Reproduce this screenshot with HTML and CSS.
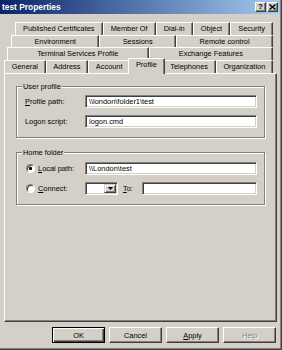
FILE: index.html
```html
<!DOCTYPE html>
<html lang="en">
<head>
    <meta charset="UTF-8">
    <title>test Properties</title>
    <link rel="stylesheet" href="styles.css">
</head>
<body>
    <div class="window">
        <div class="titlebar">
            <span class="title">test Properties</span>
            <div class="caption-buttons">
                <span class="cap-btn help-btn">?</span>
                <span class="cap-btn close-btn">
                    <svg width="7" height="6" viewBox="0 0 7 6"><path d="M0.5 0.5 L6.5 5.5 M6.5 0.5 L0.5 5.5" stroke="#000" stroke-width="1.4"/></svg>
                </span>
            </div>
        </div>

        <div class="tabs">
            <div class="tab-row row1">
                <div class="tab">Published Certificates</div>
                <div class="tab">Member Of</div>
                <div class="tab">Dial-in</div>
                <div class="tab">Object</div>
                <div class="tab">Security</div>
            </div>
            <div class="tab-row row2">
                <div class="tab">Environment</div>
                <div class="tab">Sessions</div>
                <div class="tab">Remote control</div>
            </div>
            <div class="tab-row row3">
                <div class="tab">Terminal Services Profile</div>
                <div class="tab">Exchange Features</div>
            </div>
            <div class="tab-row row4">
                <div class="tab">General</div>
                <div class="tab">Address</div>
                <div class="tab">Account</div>
                <div class="tab active">Profile</div>
                <div class="tab">Telephones</div>
                <div class="tab">Organization</div>
            </div>
        </div>

        <div class="panel">
            <div class="group user-group">
                <div class="group-title">User profile</div>
                <div class="field-row first">
                    <label class="field-label"><u>P</u>rofile path:</label>
                    <div class="textbox">\\london\folder1\test</div>
                </div>
                <div class="field-row">
                    <label class="field-label">Logon script:</label>
                    <div class="textbox">logon.cmd</div>
                </div>
            </div>

            <div class="group home-group">
                <div class="group-title">Home folder</div>
                <div class="field-row first">
                    <span class="radio checked"></span>
                    <label class="radio-label"><u>L</u>ocal path:</label>
                    <div class="textbox">\\London\test</div>
                </div>
                <div class="field-row">
                    <span class="radio"></span>
                    <label class="radio-label"><u>C</u>onnect:</label>
                    <div class="combo">
                        <div class="combo-value"></div>
                        <div class="combo-btn">
                            <svg width="5" height="3" viewBox="0 0 5 3"><path d="M0 0 H5 L2.5 3 Z" fill="#000"/></svg>
                        </div>
                    </div>
                    <label class="to-label"><u>T</u>o:</label>
                    <div class="textbox"></div>
                </div>
            </div>
        </div>

        <div class="button-bar">
            <button class="btn default">OK</button>
            <button class="btn">Cancel</button>
            <button class="btn"><u>A</u>pply</button>
            <button class="btn disabled">Help</button>
        </div>
    </div>
</body>
</html>
```

FILE: styles.css
```css
body {
    margin: 0;
    background-color: #d4d0c8;
    font-family: "Liberation Sans", Arial, sans-serif;
    font-size: 7.4px;
    color: #000;
}
.window {
    width: 282px;
    height: 350px;
    box-sizing: border-box;
    background-color: #d4d0c8;
    border-right: 1px solid #404040;
    border-bottom: 1px solid #404040;
    box-shadow: inset -1px -1px 0 #808080;
    display: flex;
    flex-direction: column;
}

/* title bar */
.titlebar {
    height: 14px;
    margin-right: 1px;
    padding: 0 2px 0 2px;
    background: linear-gradient(to right, #0a246a, #a6caf0);
    display: flex;
    align-items: center;
    justify-content: space-between;
}
.title {
    color: #fff;
    font-weight: bold;
    font-size: 8.4px;
}
.caption-buttons {
    display: flex;
    gap: 1px;
}
.cap-btn {
    width: 11px;
    height: 10px;
    box-sizing: border-box;
    background-color: #d4d0c8;
    border-top: 1px solid #fff;
    border-left: 1px solid #fff;
    border-right: 1px solid #404040;
    border-bottom: 1px solid #404040;
    box-shadow: inset -1px -1px 0 #808080;
    display: flex;
    align-items: center;
    justify-content: center;
    font-weight: bold;
    font-size: 8px;
    line-height: 8px;
}

/* tabs */
.tabs {
    margin-top: 8px;
}
.tab-row {
    display: flex;
    height: 13px;
    margin-right: 8px;
}
.row1 { margin-left: 15px; }
.row2 { margin-left: 11px; height: 12px; }
.row3 { margin-left: 7px; }
.row4 { margin-left: 4px; }
.tab {
    flex: 1 1 auto;
    padding: 0 3px;
    border-top: 1px solid #fff;
    border-left: 1px solid #fff;
    border-right: 1px solid #404040;
    box-shadow: inset -1px 0 0 #808080;
    text-align: center;
    line-height: 11px;
    white-space: nowrap;
    background-color: #d4d0c8;
}
.tab.active {
    margin: -2px -2px -1px -2px;
    padding-bottom: 2px;
    line-height: 11px;
    z-index: 1;
}

/* panel */
.panel {
    height: 249px;
    margin: 0 4px;
    box-sizing: border-box;
    border-top: 1px solid #fff;
    border-left: 1px solid #fff;
    border-right: 1px solid #404040;
    border-bottom: 1px solid #404040;
    box-shadow: inset -1px -1px 0 #808080;
    padding-top: 12px;
}
.group {
    margin: 0 11px;
    box-sizing: border-box;
    border: 1px solid #808080;
    box-shadow: 1px 1px 0 #fff, inset 1px 1px 0 #fff;
    padding: 0 7px 0 8px;
}
.user-group {
    height: 52px;
}
.home-group {
    height: 53px;
    margin-top: 14px;
}
.group-title {
    width: fit-content;
    height: 9px;
    line-height: 9px;
    margin: -5px 0 0 -3px;
    padding: 0 1px;
    background-color: #d4d0c8;
}
.field-row {
    display: flex;
    align-items: center;
    height: 13px;
    margin-top: 7px;
}
.user-group .field-row.first {
    margin-top: 4px;
}
.home-group .field-row.first {
    margin-top: 5px;
}
.field-label {
    width: 60px;
    flex-shrink: 0;
}
.radio {
    width: 9px;
    height: 9px;
    box-sizing: border-box;
    margin-left: 1px;
    border-radius: 50%;
    border: 1px solid;
    border-color: #808080 #fff #fff #808080;
    box-shadow: inset 1px 1px 0 #404040;
    background: #fff;
    flex-shrink: 0;
}
.radio.checked {
    background: radial-gradient(circle, #000 1.3px, #fff 1.8px);
}
.radio-label {
    width: 47px;
    margin-left: 3px;
    flex-shrink: 0;
}
.textbox {
    flex: 1;
    height: 13px;
    box-sizing: border-box;
    background-color: #fff;
    border-top: 1px solid #808080;
    border-left: 1px solid #808080;
    border-right: 1px solid #fff;
    border-bottom: 1px solid #fff;
    box-shadow: inset 1px 1px 0 #404040, inset -1px -1px 0 #d4d0c8;
    padding-left: 3px;
    line-height: 11px;
    white-space: nowrap;
    overflow: hidden;
}
.combo {
    width: 33px;
    height: 13px;
    box-sizing: border-box;
    flex-shrink: 0;
    display: flex;
    background-color: #fff;
    border-top: 1px solid #808080;
    border-left: 1px solid #808080;
    border-right: 1px solid #fff;
    border-bottom: 1px solid #fff;
    box-shadow: inset 1px 1px 0 #404040, inset -1px -1px 0 #d4d0c8;
    padding: 1px;
}
.combo-value {
    flex: 1;
}
.combo-btn {
    width: 12px;
    box-sizing: border-box;
    background-color: #d4d0c8;
    border-top: 1px solid #d4d0c8;
    border-left: 1px solid #d4d0c8;
    border-right: 1px solid #404040;
    border-bottom: 1px solid #404040;
    box-shadow: inset 1px 1px 0 #fff, inset -1px -1px 0 #808080;
    display: flex;
    align-items: center;
    justify-content: center;
}
.to-label {
    width: 19px;
    margin-left: 5px;
    flex-shrink: 0;
}

/* bottom buttons */
.button-bar {
    display: flex;
    justify-content: flex-end;
    gap: 4px;
    margin: 5px 5px 0 0;
}
.btn {
    width: 53px;
    height: 16px;
    box-sizing: border-box;
    padding: 0;
    font-family: inherit;
    font-size: 7.4px;
    color: #000;
    background-color: #d4d0c8;
    border-top: 1px solid #fff;
    border-left: 1px solid #fff;
    border-right: 1px solid #404040;
    border-bottom: 1px solid #404040;
    box-shadow: inset -1px -1px 0 #808080;
    border-radius: 0;
}
.btn.default {
    border: 1px solid #000;
    box-shadow: inset 1px 1px 0 #fff, inset -1px -1px 0 #404040, inset -2px -2px 0 #808080;
}
.btn.disabled {
    color: #808080;
    text-shadow: 1px 1px 0 #fff;
}
```
